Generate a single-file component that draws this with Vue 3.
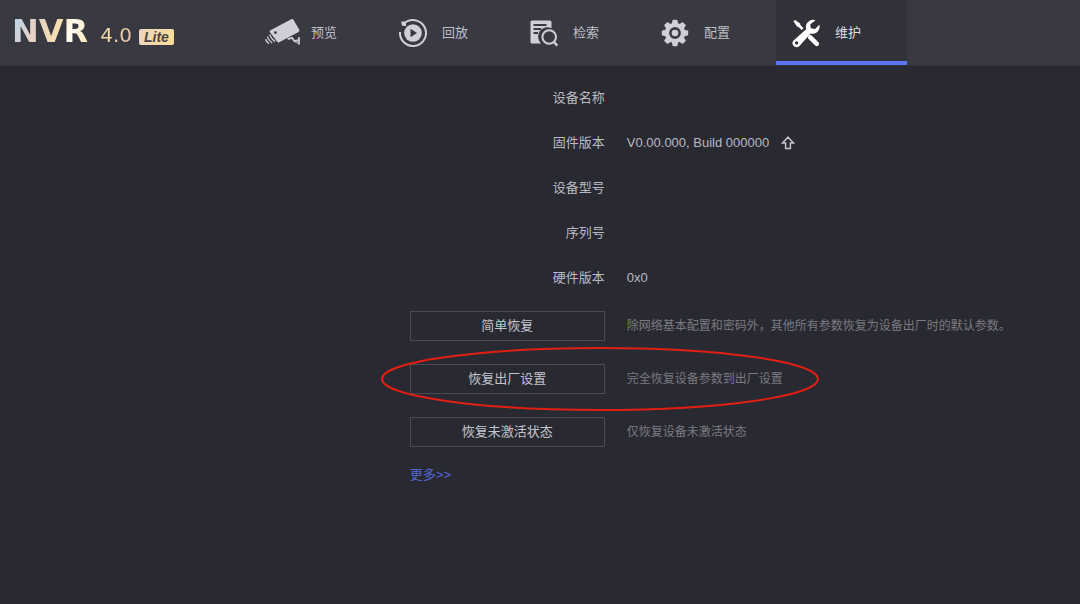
<script setup>
const tabs = [
  { id: 'preview', label: '预览' },
  { id: 'playback', label: '回放' },
  { id: 'search', label: '检索' },
  { id: 'config', label: '配置' },
  { id: 'maintain', label: '维护', active: true }
]

const info = [
  { label: '设备名称', value: '' },
  { label: '固件版本', value: 'V0.00.000, Build 000000', upgrade: true },
  { label: '设备型号', value: '' },
  { label: '序列号', value: '' },
  { label: '硬件版本', value: '0x0' }
]

const actions = [
  { label: '简单恢复', note: '除网络基本配置和密码外，其他所有参数恢复为设备出厂时的默认参数。' },
  { label: '恢复出厂设置', note: '完全恢复设备参数到出厂设置', marked: true },
  { label: '恢复未激活状态', note: '仅恢复设备未激活状态' }
]

const teeth = [0, 45, 90, 135, 180, 225, 270, 315]
</script>

<template>
  <div class="page">
    <header class="header">
      <div class="logo">
        <span class="brand">NVR</span>
        <span class="version">4.0</span>
        <span class="edition">Lite</span>
      </div>
      <nav class="nav">
        <a
          v-for="tab in tabs"
          :key="tab.id"
          href="#"
          class="tab"
          :class="{ active: tab.active }"
        >
          <svg v-if="tab.id === 'preview'" class="icon wide" viewBox="0 0 36 28" aria-hidden="true">
            <path d="M5.5 11.2 26.3 .3 Q27.8 -.3 28.6 1 L34.3 10.8 Q34.8 12.2 33.6 12.9 L14.2 23.2 Q12.8 23.8 12 22.5 L4.8 13 Q4.3 11.8 5.5 11.2Z" fill="currentColor" />
            <circle cx="10.4" cy="13.6" r="1.4" class="hole" />
            <path d="M22.6 20.2 27 18.8 29.6 22.2 33.6 21.2" class="line" stroke-width="1.8" />
            <path d="M34 18.2V25.6" class="line" stroke-width="1.8" />
            <path d="M33.6 24.6 29.6 22.4" class="line" stroke-width="1" />
            <path d="M4.6 15.4 Q6 19.6 10 22.6M2.4 17.6 Q3.6 21.4 7.2 24M.6 20.2 Q1.4 22.8 4 24.8" class="line" stroke-width="1.4" />
          </svg>
          <svg v-else-if="tab.id === 'playback'" class="icon" viewBox="0 0 28 28" aria-hidden="true">
            <path d="M5 4.6A13 13 0 1 1 1 13" class="line" stroke-width="2" />
            <path d="M2.2 2.5H7V7.2L2.8 6.6Z" fill="currentColor" />
            <circle cx="14" cy="14" r="8.8" fill="currentColor" />
            <path d="M11.5 9.8 18 14 11.5 18.2Z" class="hole" />
          </svg>
          <svg v-else-if="tab.id === 'search'" class="icon" viewBox="0 0 28 28" aria-hidden="true">
            <path d="M2 1.5H20Q21.5 1.5 21.5 3V9.2A9.3 9.3 0 0 0 11.2 24.5H2Q.5 24.5.5 23V3Q.5 1.5 2 1.5Z" fill="currentColor" />
            <path d="M3.5 6H16.5M3.5 10H11M3.5 14H8" class="cut" />
            <circle cx="19.2" cy="18" r="6.8" class="line" stroke-width="2" />
            <path d="M24 23 27.3 26.6" class="line" stroke-width="2.4" />
          </svg>
          <svg v-else-if="tab.id === 'config'" class="icon" viewBox="0 0 28 28" aria-hidden="true">
            <path
              v-for="angle in teeth"
              :key="angle"
              d="M10.6 6 11.5 1.4Q11.7.8 12.4.8H15.6Q16.3.8 16.5 1.4L17.4 6Z"
              fill="currentColor"
              :transform="`rotate(${angle} 14 14)`"
            />
            <circle cx="14" cy="14" r="10.2" fill="currentColor" />
            <circle cx="14" cy="14" r="4.6" fill="none" class="ring" />
          </svg>
          <svg v-else class="icon" viewBox="0 0 28 28" aria-hidden="true">
            <path d="M1.5 2.3 3.2.9 8.1 4.4 8.4 6 11.5 9.2 9.7 11 6.5 7.9 5 7.6Z" fill="currentColor" />
            <path d="M18.2 18.3 24.8 24.8" class="line" stroke-width="4.6" stroke-linecap="round" />
            <path d="M23.5 1.3A7.2 7.2 0 0 0 14.2 10.2L1.8 21.2A4 4 0 1 0 7.5 26.9L18.6 14.5A7.2 7.2 0 0 0 27.4 5.8L23 10.1 18.8 9.2 18.2 5.4Z" fill="currentColor" />
            <circle cx="4.6" cy="23.9" r="1.7" class="hole" />
          </svg>
          <span>{{ tab.label }}</span>
        </a>
      </nav>
    </header>

    <main class="content">
      <dl class="info">
        <div v-for="row in info" :key="row.label" class="row">
          <dt>{{ row.label }}</dt>
          <dd>
            <span>{{ row.value }}</span>
            <button v-if="row.upgrade" type="button" class="upgrade" aria-label="升级">
              <svg viewBox="0 0 14 14" aria-hidden="true">
                <path d="M7 1.2 12.5 7H9.4V12.6H4.6V7H1.5Z" />
              </svg>
            </button>
          </dd>
        </div>
      </dl>

      <div class="actions">
        <div v-for="(action, i) in actions" :key="action.label" class="row">
          <div class="control">
            <button type="button" class="action" :aria-describedby="`note-${i}`">{{ action.label }}</button>
            <svg v-if="action.marked" class="mark" viewBox="0 0 440 66" aria-hidden="true">
              <ellipse cx="220" cy="33" rx="218" ry="31" />
            </svg>
          </div>
          <p :id="`note-${i}`" class="note">{{ action.note }}</p>
        </div>
        <div class="row">
          <div class="control">
            <a href="#" class="more">更多&gt;&gt;</a>
          </div>
        </div>
      </div>
    </main>
  </div>
</template>

<style>
body {
  background: #292932;
}
</style>

<style scoped>
.page {
  min-height: 100vh;
  background: #292932;
  color: #b9b9c1;
  font-family: "Liberation Sans", "Noto Sans CJK SC", sans-serif;
  font-size: 13px;
  line-height: 20px;
}

.header {
  display: flex;
  height: 65px;
  background: #393942;
  border-bottom: 1px solid #31313a;
}

.logo {
  display: flex;
  align-items: baseline;
  flex: none;
  width: 240px;
  padding: 11px 0 0 12px;
  line-height: 40px;
}

.brand,
.version {
  background-clip: text;
  color: transparent;
  font-family: "DejaVu Sans", sans-serif;
}

.brand {
  font-size: 32px;
  font-weight: bold;
  background-image: linear-gradient(110deg, #b8d3e6 5%, #e6d0c8 30%, #f6dfb0 58%, #fffef2 72%, #fbe5b0 100%);
}

.version {
  margin-left: 12px;
  font-size: 20px;
  background-image: linear-gradient(90deg, #f8e1a8, #eac7ac);
}

.edition {
  margin-left: 7px;
  padding: 0 5px;
  border-radius: 2px;
  background: linear-gradient(90deg, #ecd5c0, #f8dd98);
  color: #4a4644;
  font-size: 14px;
  font-style: italic;
  font-weight: bold;
  line-height: 16px;
}

.nav {
  display: flex;
}

.tab {
  display: flex;
  align-items: center;
  gap: 15px;
  box-sizing: border-box;
  width: 131px;
  padding-left: 16px;
  border-bottom: 4px solid transparent;
  border-top: 4px solid transparent;
  color: #cfcfd8;
  text-decoration: none;
  --hole: #393942;
}

.tab.active {
  border-top-color: #313139;
  border-bottom-color: #5b74f0;
  background: #313139;
  color: #ffffff;
  --hole: #313139;
}

.tab span {
  color: #bfbfc7;
}

.tab.active span {
  color: #dedee3;
}

.icon {
  flex: none;
  width: 28px;
  height: 28px;
  overflow: visible;
}

.icon.wide {
  width: 36px;
  margin: 0 -5px 0 -3px;
}

.line {
  fill: none;
  stroke: currentColor;
}

.hole {
  fill: var(--hole);
}

.cut {
  fill: none;
  stroke: var(--hole);
  stroke-width: 2;
}

.ring {
  stroke: var(--hole);
  stroke-width: 2.6;
}

.content {
  padding: 9px 0 40px;
}

.row {
  display: grid;
  grid-template-columns: 56% 1fr;
  align-items: center;
}

.info {
  margin: 0;
}

.info .row {
  height: 45px;
}

dt {
  text-align: right;
}

dd {
  display: flex;
  align-items: center;
  gap: 12px;
  margin: 0;
  padding-left: 22px;
}

.upgrade {
  display: flex;
  width: 14px;
  height: 14px;
  padding: 0;
  border: 0;
  background: none;
}

.upgrade path {
  fill: none;
  stroke: #c4c4cc;
  stroke-width: 1.5;
}

.actions {
  display: grid;
  gap: 23px;
  padding-top: 11px;
}

.control {
  position: relative;
  justify-self: end;
  width: 195px;
}

.action {
  display: block;
  width: 100%;
  height: 30px;
  padding: 0;
  border: 1px solid #4a4a53;
  background: transparent;
  color: #c4c4cc;
  font: inherit;
}

.note {
  margin: 0;
  padding-left: 22px;
  color: #7b7b80;
  font-size: 12px;
}

.mark {
  position: absolute;
  top: -18px;
  left: -30px;
  width: 440px;
  height: 66px;
  pointer-events: none;
}

.mark ellipse {
  fill: none;
  stroke: #e01f12;
  stroke-width: 2;
}

.more {
  display: block;
  margin-top: -5px;
  color: #5567d5;
  text-decoration: none;
}
</style>
